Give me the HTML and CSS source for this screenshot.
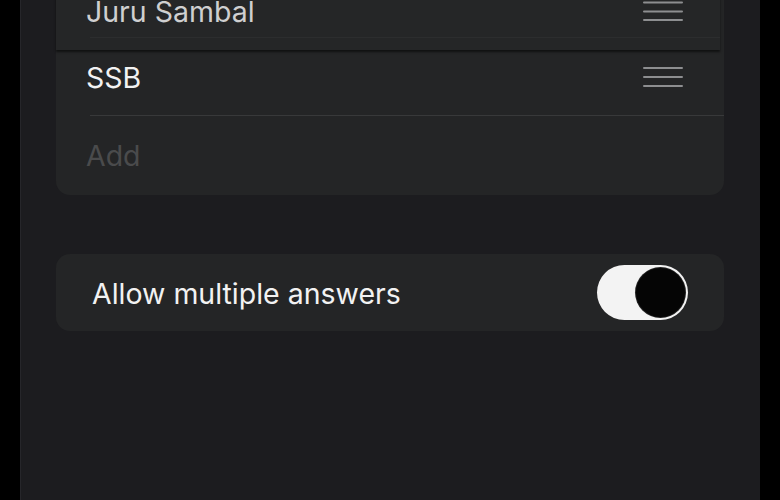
FILE: index.html
```html
<!DOCTYPE html>
<html lang="en">
<head>
<meta charset="utf-8">
<title>Poll options</title>
<link rel="stylesheet" href="styles.css">
</head>
<body>
<div class="screen">
  <div class="card options">
    <div class="row lifted">
      <span class="label dim">Juru Sambal</span>
      <svg class="handle" width="40" height="20" viewBox="0 0 40 20"><path d="M1 1.5H39M1 10.5H39M1 19H39" stroke="#8d8e90" stroke-width="2" stroke-linecap="round"/></svg>
    </div>
    <div class="row sep">
      <span class="label">SSB</span>
      <svg class="handle" width="40" height="20" viewBox="0 0 40 20"><path d="M1 1H39M1 10H39M1 19H39" stroke="#8d8e90" stroke-width="2" stroke-linecap="round"/></svg>
    </div>
    <div class="row last">
      <span class="label placeholder">Add</span>
    </div>
  </div>
  <div class="card setting">
    <span class="label">Allow multiple answers</span>
    <div class="toggle"><div class="knob"></div></div>
  </div>
</div>
</body>
</html>
```
FILE: styles.css
```css
html, body {
  margin: 0;
  padding: 0;
  background: #000;
  height: 500px;
  overflow: hidden;
}
body {
  font-family: Inter, "Noto Sans", sans-serif;
}
.screen {
  margin: 0 20px;
  height: 500px;
  background: #1c1c1f;
  border-left: 1px solid #26262a;
  padding: 0 36px 0 35px;
  box-sizing: border-box;
  display: flex;
  flex-direction: column;
}
.card {
  background: #242526;
  border-radius: 14px;
}
.options {
  margin-top: -28px;
  display: flex;
  flex-direction: column;
}
.row {
  height: 78px;
  flex: none;
  display: flex;
  align-items: center;
  justify-content: space-between;
  padding: 0 41px 0 30px;
  box-sizing: border-box;
  position: relative;
}
.row.last { height: 79px; }
.lifted {
  z-index: 1;
  margin-bottom: -12px;
  margin-right: 4px;
  background: #252627;
  box-shadow: 0 2px 2px rgba(0, 0, 0, 0.55);
}
.lifted::after {
  content: "";
  position: absolute;
  left: 34px;
  right: 0;
  bottom: 12px;
  height: 1px;
  background: #2c2d2e;
}
.lifted .handle { margin-right: -4px; }
.sep::after {
  content: "";
  position: absolute;
  left: 34px;
  right: 0;
  bottom: 0;
  height: 1px;
  background: #38393a;
}
.label {
  font-size: 28.5px;
  color: #f2f2f2;
}
.dim { color: #cfcfd0; }
.placeholder { color: #4a4b4c; }
.setting {
  margin-top: 59px;
  height: 77px;
  flex: none;
  display: flex;
  align-items: center;
  justify-content: space-between;
  padding: 0 36px 0 36px;
}
.setting .label { margin-top: 2px; }
.toggle {
  width: 91px;
  height: 55px;
  border-radius: 28px;
  background: #f3f3f3;
  display: flex;
  align-items: center;
  justify-content: flex-end;
  padding: 0 3px;
  box-sizing: border-box;
}
.knob {
  width: 49px;
  height: 49px;
  border-radius: 50%;
  background: #050505;
  box-shadow: 0 0 0 1px #222;
}
```
